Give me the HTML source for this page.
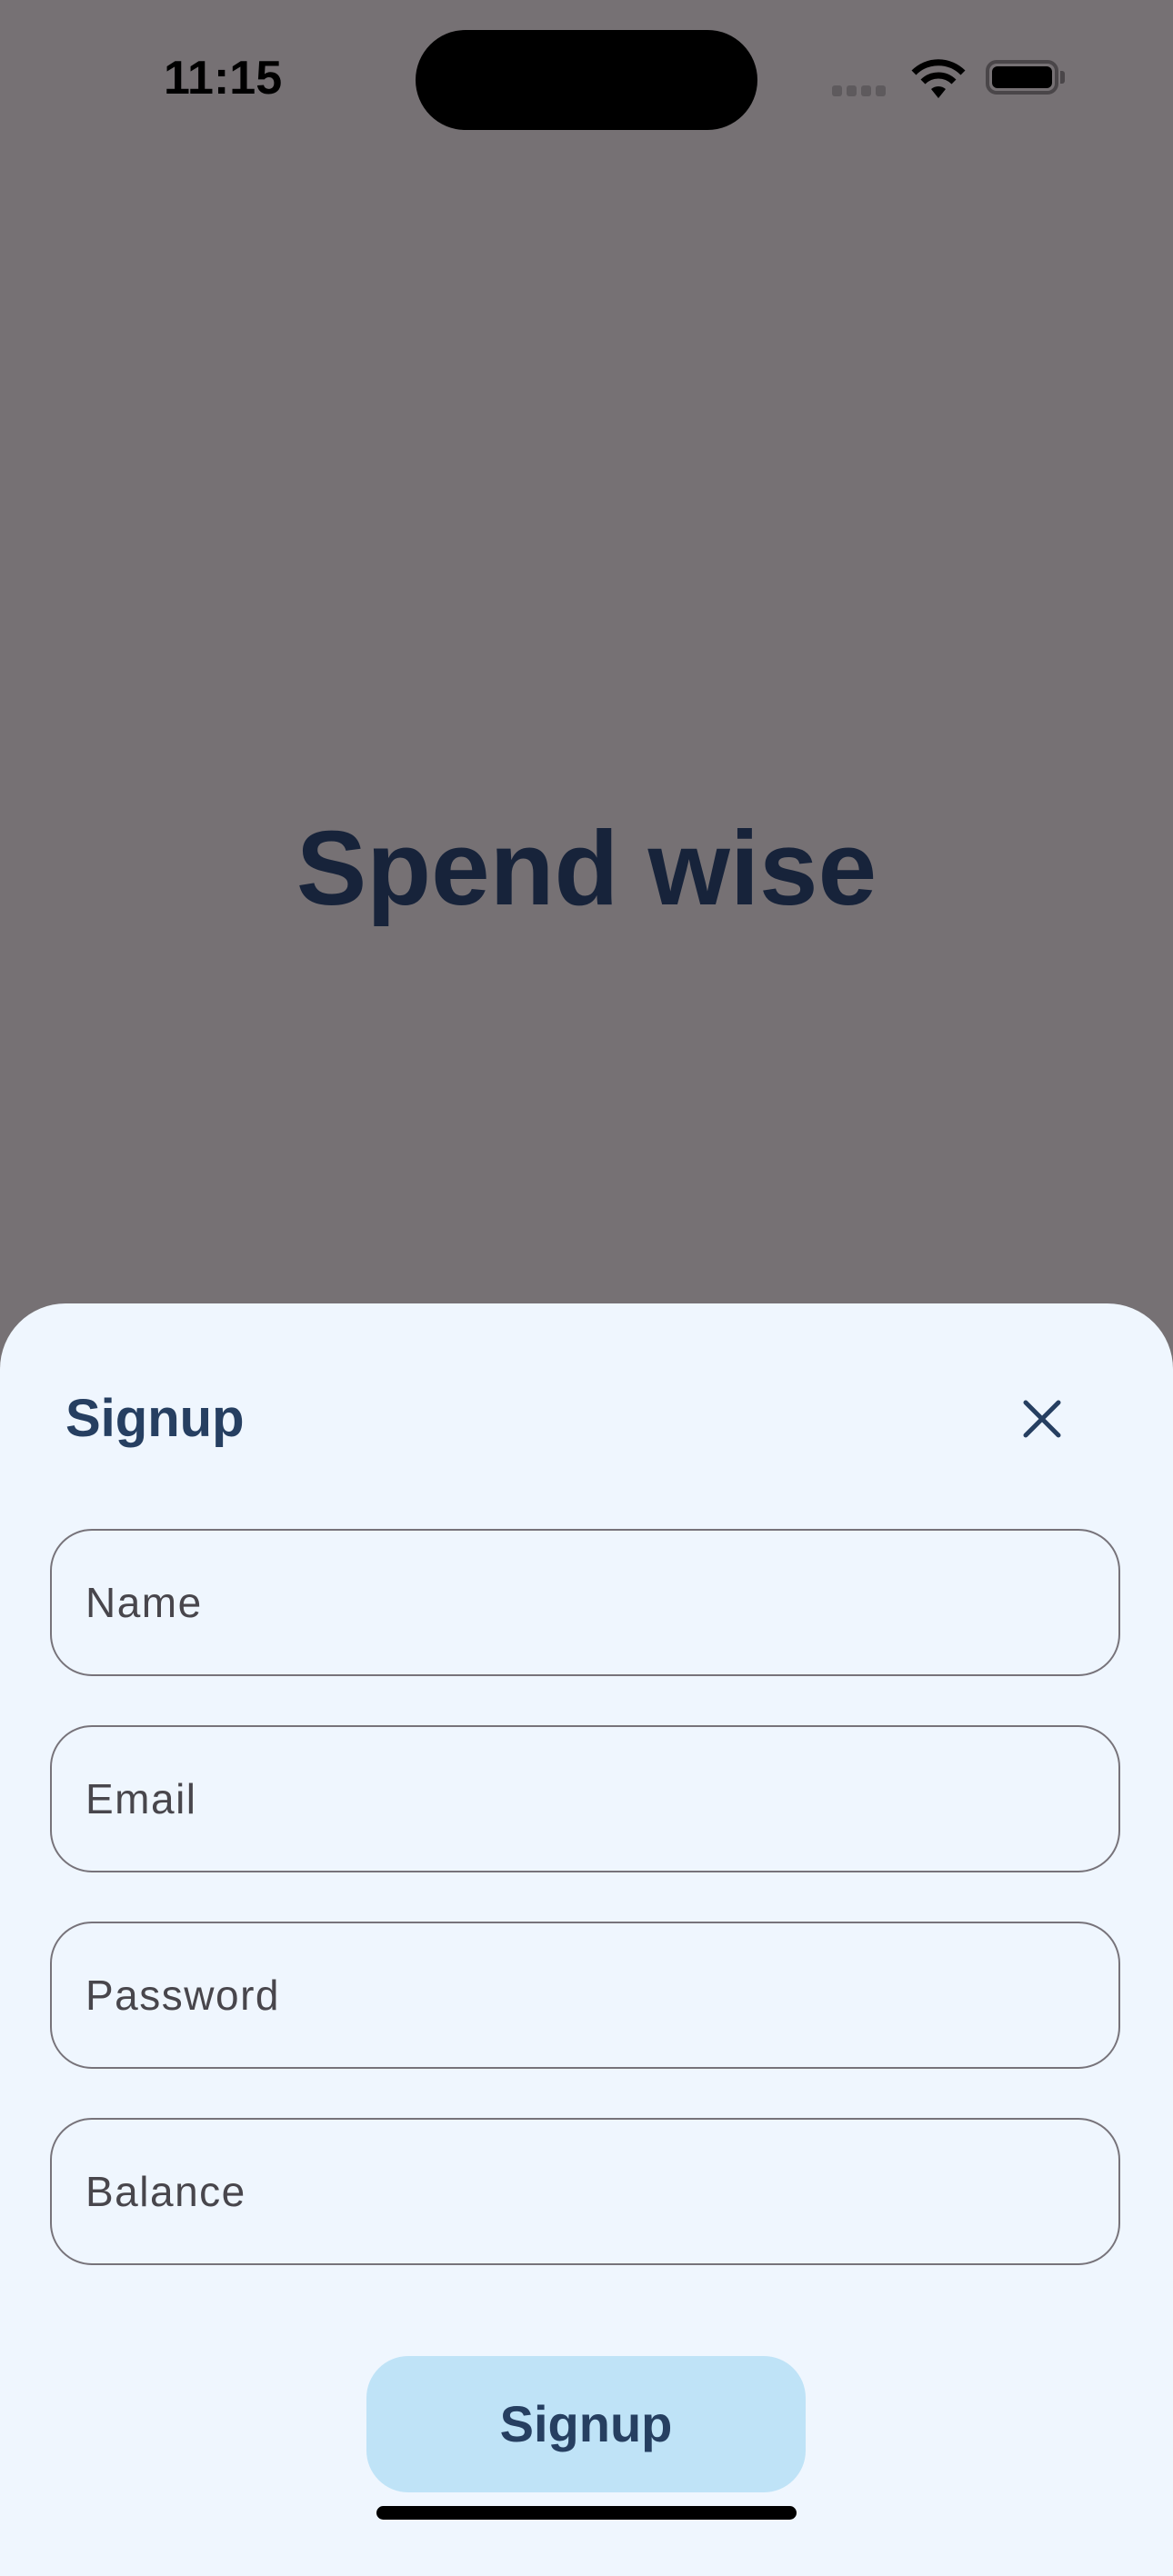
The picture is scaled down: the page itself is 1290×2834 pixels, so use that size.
<!DOCTYPE html>
<html><head><meta charset="utf-8"><style>
html,body{margin:0;padding:0}
body{width:1290px;height:2796px;background:#767174;position:relative;overflow:hidden;font-family:"Liberation Sans",sans-serif}
.abs{position:absolute}
.field{position:absolute;left:55px;width:1177px;height:162px;border:2.5px solid #77737a;border-radius:46px;box-sizing:border-box}
.field span{position:absolute;left:37px;top:50%;transform:translateY(-50%);font-size:46px;color:#48464c;letter-spacing:1.5px}
</style></head><body>
<div class="abs" style="left:180px;top:56px;font-size:52px;font-weight:bold;color:#000">11:15</div>
<div class="abs" style="left:457px;top:33px;width:376px;height:110px;border-radius:55px;background:#000"></div>
<div class="abs" style="left:915px;top:94px;width:60px;height:12px;display:flex;gap:5px">
<div style="width:11px;height:12px;border-radius:3px;background:#5e5a5d"></div><div style="width:11px;height:12px;border-radius:3px;background:#5e5a5d"></div><div style="width:11px;height:12px;border-radius:3px;background:#5e5a5d"></div><div style="width:11px;height:12px;border-radius:3px;background:#5e5a5d"></div></div>
<svg class="abs" style="left:1002px;top:64px" width="60" height="44" viewBox="0 0 60 44"><path d="M3 16 A38 38 0 0 1 57 16" stroke="#000" stroke-width="7" fill="none"/><path d="M13 26 A24 24 0 0 1 47 26" stroke="#000" stroke-width="7" fill="none"/><path d="M22 34 L30 44 L38 34 A12 12 0 0 0 22 34Z" fill="#000"/></svg>
<div class="abs" style="left:1084px;top:66px;width:80px;height:38px;border:4px solid #4a4649;border-radius:12px;box-sizing:border-box"></div>
<div class="abs" style="left:1091px;top:73px;width:66px;height:24px;border-radius:6px;background:#000"></div>
<div class="abs" style="left:1166px;top:78px;width:5px;height:14px;border-radius:0 3px 3px 0;background:#4a4649"></div>
<div class="abs" style="left:0;width:1290px;top:888px;text-align:center;font-size:116px;font-weight:bold;color:#17233a;letter-spacing:0px">Spend wise</div>
<div class="abs" style="left:0;top:1434px;width:1290px;height:1400px;background:#eff6fe;border-radius:72px 72px 0 0"></div>
<div class="abs" style="left:72px;top:1527px;font-size:58px;font-weight:bold;color:#263f61;letter-spacing:0px">Signup</div>
<svg class="abs" style="left:1124px;top:1539px" width="44" height="44" viewBox="0 0 44 44"><path d="M4 4L40 40M40 4L4 40" stroke="#263f61" stroke-width="5" stroke-linecap="round"/></svg>
<div class="field" style="top:1682px"><span>Name</span></div>
<div class="field" style="top:1898px"><span>Email</span></div>
<div class="field" style="top:2114px"><span>Password</span></div>
<div class="field" style="top:2330px"><span>Balance</span></div>
<div class="abs" style="left:403px;top:2592px;width:483px;height:150px;border-radius:46px;background:#bfe3f7;text-align:center;line-height:150px;font-size:56px;font-weight:bold;color:#263f61">Signup</div>
<div class="abs" style="left:414px;top:2757px;width:462px;height:15px;border-radius:8px;background:#000"></div>
</body></html>
